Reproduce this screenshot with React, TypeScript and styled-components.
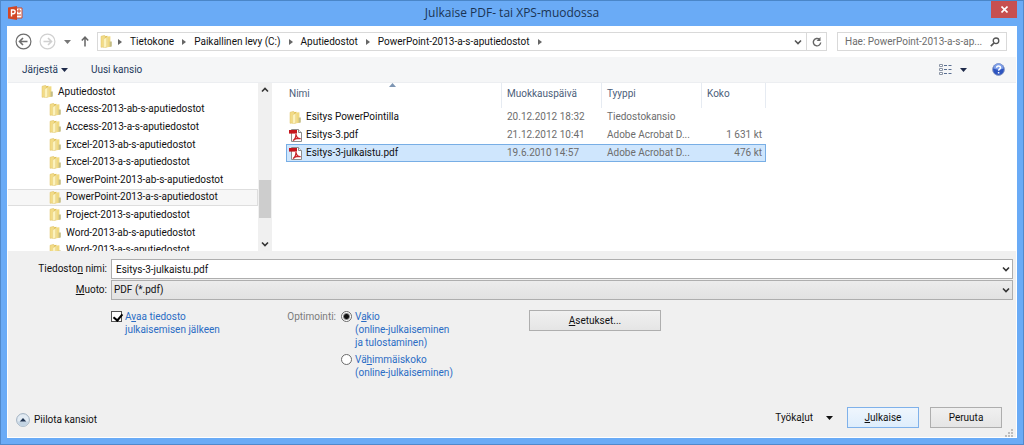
import React from "react";
import styled, { createGlobalStyle } from "styled-components";

const GlobalStyle = createGlobalStyle`
  * { box-sizing: border-box; }
  body { margin: 0; }
  button, input, select, table { font: inherit; color: inherit; }
  button { margin: 0; padding: 0; border: 0; background: none; }
  svg { display: block; flex: none; }
`;

const Frame = styled.div`
  min-height: 100vh;
  display: flex;
  flex-direction: column;
  padding: 0 6px 6px;
  border: 1px solid #5189cb;
  border-top-color: #4a86c8;
  background: #6aabf6;
  color: #111;
  font: 10px/16px Roboto, "Open Sans", sans-serif;
`;

const TitleBar = styled.header`
  display: grid;
  grid-template-columns: 26px 1fr 26px;
  height: 25px;
  svg { margin: 5px 0 0 1px; }
`;

const Title = styled.h1`
  margin: 0;
  text-align: center;
  font: 400 12px/24px "Open Sans", sans-serif;
  color: #1a3454;
`;

const CloseButton = styled.button`
  height: 17px;
  background: #c75050;
  display: flex;
  justify-content: center;
  && svg { margin: 5px 0 0; }
`;

const Client = styled.main`
  flex: 1;
  display: flex;
  flex-direction: column;
  background: #fff;
  border: 1px solid #fff;
  border-top: 0;
`;

const NavBar = styled.nav`
  display: flex;
  align-items: center;
  padding: 6px 9px 6px 7px;
  height: 31px;
`;

const IconButton = styled.button<{ $w: number }>`
  width: ${(p) => p.$w}px;
  display: flex;
  align-items: center;
  justify-content: center;
  align-self: stretch;
`;

const AddressBar = styled.div`
  flex: 1;
  min-width: 0;
  display: flex;
  align-items: center;
  height: 19px;
  margin-right: 10px;
  padding-left: 2px;
  border: 1px solid #d9d9d9;
`;

const Crumbs = styled.ol`
  flex: 1;
  display: flex;
  align-items: center;
  margin: 0;
  padding: 0 0 0 5px;
  list-style: none;
  white-space: nowrap;
  li { display: flex; align-items: center; gap: 8px; margin-right: 8px; }
  a { color: #111; text-decoration: none; }
`;

const RefreshButton = styled(IconButton)`
  border-left: 1px solid #d9d9d9;
`;

const SearchBox = styled.label`
  width: 170px;
  height: 19px;
  display: flex;
  align-items: center;
  border: 1px solid #d9d9d9;
  padding: 0 6px 0 7px;
  input {
    flex: 1;
    min-width: 0;
    padding: 0;
    border: 0;
    outline: 0;
    background: none;
    height: 16px;
  }
  input::placeholder { color: #6d6d6d; opacity: 1; }
`;

const ToolBar = styled.div`
  display: flex;
  align-items: center;
  height: 26px;
  padding: 0 10px 0 14px;
  background: #f5f6f7;
  border-bottom: 1px solid #eceef1;
  color: #1e395b;
`;

const ToolButton = styled.button`
  display: flex;
  align-items: center;
  gap: 3px;
  margin-right: 23px;
`;

const HelpButton = styled(IconButton)`
  margin-left: 17px;
`;

const Spacer = styled.span`
  flex: 1;
`;

const Browser = styled.section`
  display: flex;
  height: 168px;
  overflow: hidden;
`;

const Tree = styled.ul`
  width: 250px;
  height: 176px;
  flex: none;
  display: flex;
  flex-direction: column;
  margin: 0;
  padding: 0;
  list-style: none;
  line-height: 14px;
`;

const TreeItem = styled.li<{ $depth: number; $current?: boolean }>`
  flex: 1;
  min-height: 0;
  display: flex;
  align-items: center;
  gap: 4px;
  padding-left: ${(p) => 25 + p.$depth * 8}px;
  border: 1px solid ${(p) => (p.$current ? "#dedede" : "transparent")};
  border-left: 0;
  background: ${(p) => (p.$current ? "#f7f7f7" : "none")};
  background-clip: padding-box;
`;

const ScrollBar = styled.div`
  width: 14px;
  flex: none;
  display: flex;
  flex-direction: column;
  align-items: center;
  justify-content: space-between;
  background: #f0f0f0;
  padding: 4px 1px;
`;

const ScrollThumb = styled.div`
  width: 12px;
  height: 38px;
  margin-top: 64px;
  background: #cdcdcd;
`;

const FileTable = styled.table`
  width: 480px;
  margin-left: 14px;
  align-self: flex-start;
  table-layout: fixed;
  border-collapse: separate;
  border-spacing: 0;
  th {
    position: relative;
    height: 25px;
    padding: 0 0 3px 5px;
    text-align: left;
    font-weight: 400;
    color: #4c607a;
    border-right: 1px solid #e6ebf2;
  }
  th:first-child { padding-left: 3px; }
  td { height: 18px; padding: 0 4px 0 5px; color: #6d6d6d; white-space: nowrap; line-height: 16px; }
  td:first-child { padding-left: 3px; color: #111; }
  td:last-child { text-align: right; }
`;

const SortMark = styled.svg`
  position: absolute;
  top: 0;
  left: 48%;
`;

const FileRow = styled.tr<{ $selected?: boolean }>`
  td {
    border: 0 solid #78aee5;
    border-width: ${(p) => (p.$selected ? "1px 0" : "0")};
    background: ${(p) => (p.$selected ? "#cfe6fd" : "none")};
  }
  td:first-child { border-left-width: ${(p) => (p.$selected ? "1px" : "0")}; padding-left: ${(p) => (p.$selected ? "2px" : "3px")}; }
  td:last-child { border-right-width: ${(p) => (p.$selected ? "1px" : "0")}; padding-right: ${(p) => (p.$selected ? "3px" : "4px")}; }
`;

const FileName = styled.span`
  display: flex;
  align-items: center;
  gap: 4px;
`;

const Panel = styled.form`
  flex: 1;
  display: flex;
  flex-direction: column;
  background: #f0f0f0;
  padding: 8px 3px 9px 0;
`;

const Field = styled.div`
  display: grid;
  grid-template-columns: 99px 1fr;
  column-gap: 4px;
  align-items: center;
  margin-bottom: 1px;
  > label { text-align: right; }
`;

const Combo = styled.div<{ $filled?: boolean }>`
  display: flex;
  align-items: center;
  height: 20px;
  border: 1px solid #aeaeae;
  background: ${(p) => (p.$filled ? "linear-gradient(#ececec, #e2e2e2)" : "#fff")};
  padding-right: 2px;
  input, select {
    flex: 1;
    min-width: 0;
    height: 18px;
    border: 0;
    outline: 0;
    background: none;
    appearance: none;
    padding: 0 4px;
  }
  select { padding: 0 2px; }
`;

const Options = styled.div`
  display: flex;
  align-items: flex-start;
  padding: 9px 0 0 103px;
  line-height: 13px;
`;

const Choice = styled.label`
  display: flex;
  gap: 3px;
  color: #2a6cc4;
`;

const OpenAfter = styled(Choice)`
  width: 164px;
`;

const Legend = styled.span`
  width: 66px;
  padding-right: 5px;
  text-align: right;
  color: #7b7b7b;
`;

const Radios = styled.div`
  width: 188px;
  display: flex;
  flex-direction: column;
  gap: 4px;
`;

const Check = styled.input`
  appearance: none;
  position: relative;
  flex: none;
  width: 11px;
  height: 11px;
  margin: 1px 0 0;
  border: 1px solid #555;
  background: #fff;
  &:checked::after {
    content: "";
    position: absolute;
    left: 3px;
    top: 0;
    width: 4px;
    height: 7px;
    border: solid #000;
    border-width: 0 2px 2px 0;
    transform: rotate(40deg);
  }
`;

const Radio = styled.input`
  appearance: none;
  flex: none;
  width: 11px;
  height: 11px;
  margin: 1px 0 0;
  border: 1px solid #6b6b6b;
  border-radius: 50%;
  background: #fff;
  &:checked { background: radial-gradient(circle, #111 0 2px, #fff 4px) border-box; }
`;

const PushButton = styled.button<{ $width: number; $primary?: boolean }>`
  width: ${(p) => p.$width}px;
  height: 21px;
  border: 1px solid ${(p) => (p.$primary ? "#7fb1ea" : "#aeaeae")};
  background: ${(p) => (p.$primary ? "linear-gradient(#eff6fd, #deedfc)" : "linear-gradient(#f0f0f0, #e5e5e5)")};
  line-height: 18px;
`;

const Footer = styled.footer`
  position: relative;
  margin-top: auto;
  display: flex;
  align-items: flex-end;
  padding: 0 11px 0 8px;
`;

const TextButton = styled.button<{ $gap: number }>`
  display: flex;
  align-items: center;
  gap: ${(p) => p.$gap}px;
`;

const FooterActions = styled.div`
  display: flex;
  align-items: center;
  gap: 11px;
  > :first-child { margin-right: 3px; }
`;

const Grip = styled.svg`
  position: absolute;
  right: 0;
  bottom: -9px;
`;

const Folder = () => (
  <svg width="13" height="13" viewBox="0 0 13 13">
    <path d="M1 1.300 4.800.3V12L1 12.300z" fill="#f3dc85" stroke="#dcc06a" strokeWidth=".5" />
    <path d="M5 1.200 7.500.8v11.400L5 12.600z" fill="#e2c04f" />
    <path d="M3.600 4.200 6.800 2v10l-3.200.9z" fill="#fcf3bf" stroke="#e3cb78" strokeWidth=".4" />
    <path d="M7.600 1.600l2.800-.4v10.600l-2.800.5z" fill="#f1da80" />
    <path d="M9.600 6.400h2.200v5l-2.200.6z" fill="#c5bd85" />
  </svg>
);

const Pdf = () => (
  <svg width="13" height="13" viewBox="0 0 13 13">
    <path d="M2.500.5h7l3 3v9h-10z" fill="#fff" stroke="#8d8d8d" />
    <path d="M9.500.5v3h3" fill="#eee" stroke="#8d8d8d" />
    <path d="M0 1h8v3.600H0z" fill="#c5161d" />
    <path d="M4 11.500c1.800-1 3-3.500 3-6.500.3 3 2 4.800 4.600 4.600C9 9 6 9.600 4 11.500z" fill="none" stroke="#c9252b" strokeWidth="1.300" />
  </svg>
);

const Chevron = ({ up = false, color = "#333" }: { up?: boolean; color?: string }) => (
  <svg width="8" height="6" viewBox="0 0 8 6">
    <path d={up ? "M1 4.500 4 1.500l3 3" : "M1 1.500l3 3 3-3"} fill="none" stroke={color} strokeWidth="1.600" />
  </svg>
);

const Caret = ({ color = "#1e2a4a" }: { color?: string }) => (
  <svg width="7" height="4" viewBox="0 0 7 4">
    <path d="M0 0h7L3.500 4z" fill={color} />
  </svg>
);

const CrumbArrow = () => (
  <svg width="4" height="6" viewBox="0 0 4 6">
    <path d="M0 0l4 3-4 3z" fill="#666" />
  </svg>
);

const RoundArrow = ({ color, flip = false }: { color: string; flip?: boolean }) => (
  <svg width="17" height="17" viewBox="0 0 17 17" fill="none" stroke={color}>
    <circle cx="8.500" cy="8.500" r="7.400" strokeWidth="1.200" />
    <path d={flip ? "M4.500 8.500h8M9 5l3.500 3.500L9 12" : "M12.500 8.500h-8M8 5 4.500 8.500 8 12"} strokeWidth="1.600" />
  </svg>
);

const tree = [
  { name: "Aputiedostot", depth: 1 },
  { name: "Access-2013-ab-s-aputiedostot", depth: 2 },
  { name: "Access-2013-a-s-aputiedostot", depth: 2 },
  { name: "Excel-2013-ab-s-aputiedostot", depth: 2 },
  { name: "Excel-2013-a-s-aputiedostot", depth: 2 },
  { name: "PowerPoint-2013-ab-s-aputiedostot", depth: 2 },
  { name: "PowerPoint-2013-a-s-aputiedostot", depth: 2, current: true },
  { name: "Project-2013-s-aputiedostot", depth: 2 },
  { name: "Word-2013-ab-s-aputiedostot", depth: 2 },
  { name: "Word-2013-a-s-aputiedostot", depth: 2 },
];

const files = [
  { name: "Esitys PowerPointilla", date: "20.12.2012 18:32", type: "Tiedostokansio", size: "", folder: true },
  { name: "Esitys-3.pdf", date: "21.12.2012 10:41", type: "Adobe Acrobat D...", size: "1 631 kt" },
  { name: "Esitys-3-julkaistu.pdf", date: "19.6.2010 14:57", type: "Adobe Acrobat D...", size: "476 kt", selected: true },
];

const crumbs = ["Tietokone", "Paikallinen levy (C:)", "Aputiedostot", "PowerPoint-2013-a-s-aputiedostot"];

export default function App() {
  return (
    <Frame>
      <GlobalStyle />
      <TitleBar>
        <svg width="15" height="15" viewBox="0 0 15 15">
          <path d="M7 2h7v10H7z" fill="#fff" stroke="#d24726" />
          <path d="M9 5h4M9 9h4M11 3v4" stroke="#d24726" />
          <path d="M0 1.500 9 0v14L0 12.500z" fill="#d24726" />
          <path d="M3.500 10.500V4h1.800a1.800 1.800 0 0 1 0 3.700H3.500" fill="none" stroke="#fff" strokeWidth="1.400" />
        </svg>
        <Title>Julkaise PDF- tai XPS-muodossa</Title>
        <CloseButton type="button" aria-label="Sulje">
          <svg width="7" height="7" viewBox="0 0 7 7">
            <path d="M.5.5l6 6M6.500.5l-6 6" stroke="#fff" strokeWidth="1.600" />
          </svg>
        </CloseButton>
      </TitleBar>
      <Client>
        <NavBar>
          <IconButton $w={17} type="button" aria-label="Takaisin"><RoundArrow color="#6e6e6e" /></IconButton>
          <IconButton $w={31} type="button" aria-label="Eteenpäin"><RoundArrow color="#d0d0d0" flip /></IconButton>
          <IconButton $w={9} type="button" aria-label="Viimeisimmät"><Caret color="#777" /></IconButton>
          <IconButton $w={25} type="button" aria-label="Ylös">
            <svg width="8" height="11" viewBox="0 0 8 11" fill="none" stroke="#666" strokeWidth="1.500">
              <path d="M4 10.500V1.500M.8 4.500 4 1.200l3.200 3.300" />
            </svg>
          </IconButton>
          <AddressBar>
            <Folder />
            <Crumbs>
              <li><CrumbArrow /></li>
              {crumbs.map((c) => (
                <li key={c}><a href="#">{c}</a><CrumbArrow /></li>
              ))}
            </Crumbs>
            <IconButton $w={16} type="button" aria-label="Edelliset sijainnit"><Chevron color="#555" /></IconButton>
            <RefreshButton $w={20} type="button" aria-label="Päivitä">
              <svg width="10" height="10" viewBox="0 0 10 10">
                <path d="M7.500 2.400A3.700 3.700 0 1 0 8.700 5.500" fill="none" stroke="#666" strokeWidth="1.400" />
                <path d="M8.500 0v4H4.600z" fill="#666" />
              </svg>
            </RefreshButton>
          </AddressBar>
          <SearchBox>
            <input type="text" aria-label="Hae" placeholder="Hae: PowerPoint-2013-a-s-ap..." />
            <svg width="10" height="10" viewBox="0 0 10 10" fill="none" stroke="#555">
              <circle cx="6" cy="3.800" r="2.800" strokeWidth="1.300" />
              <path d="M4 6 .8 9.200" strokeWidth="1.700" />
            </svg>
          </SearchBox>
        </NavBar>
        <ToolBar>
          <ToolButton type="button">Järjestä <Caret /></ToolButton>
          <ToolButton type="button">Uusi kansio</ToolButton>
          <Spacer />
          <IconButton $w={16} type="button" aria-label="Näkymä">
            <svg width="13" height="11" viewBox="0 0 13 11">
              <path d="M.5.500h3v2h-3zM.5 4.500h3v2h-3zM.5 8.500h3v2h-3z" fill="#fff" stroke="#8a94a4" />
              <path d="M5 1.500h3M9.500 1.500h3M5 5.500h3M9.500 5.500h3M5 9.500h3M9.500 9.500h3" stroke="#5a6f92" />
            </svg>
          </IconButton>
          <IconButton $w={20} type="button" aria-label="Lisää näkymiä"><Caret /></IconButton>
          <HelpButton $w={16} type="button" aria-label="Ohje">
            <svg width="13" height="13" viewBox="0 0 13 13">
              <circle cx="6.500" cy="6.500" r="5.900" fill="#2e55c0" stroke="#8c9cc4" />
              <path d="M1.500 5.500a5 5 0 0 1 10 0c-3 1.500-7 1.500-10 0z" fill="#7d9ee8" />
              <path d="M4.600 4.800c0-2.400 3.900-2.300 3.900-.1 0 1.400-1.900 1.400-1.900 3M6.600 9v1.500" fill="none" stroke="#fff" strokeWidth="1.500" />
            </svg>
          </HelpButton>
        </ToolBar>
        <Browser>
          <Tree>
            {tree.map((t) => (
              <TreeItem key={t.name} $depth={t.depth} $current={t.current}><Folder />{t.name}</TreeItem>
            ))}
          </Tree>
          <ScrollBar>
            <Chevron up />
            <ScrollThumb />
            <Chevron />
          </ScrollBar>
          <FileTable>
            <colgroup><col width="216" /><col width="100" /><col width="100" /><col width="64" /></colgroup>
            <thead>
              <tr>
                <th scope="col">Nimi<SortMark width="7" height="4" viewBox="0 0 7 4"><path d="M0 4 3.500 0 7 4z" fill="#7d95b3" /></SortMark></th>
                <th scope="col">Muokkauspäivä</th>
                <th scope="col">Tyyppi</th>
                <th scope="col">Koko</th>
              </tr>
            </thead>
            <tbody>
              {files.map((f) => (
                <FileRow key={f.name} $selected={f.selected}>
                  <td><FileName>{f.folder ? <Folder /> : <Pdf />}{f.name}</FileName></td>
                  <td>{f.date}</td>
                  <td>{f.type}</td>
                  <td>{f.size}</td>
                </FileRow>
              ))}
            </tbody>
          </FileTable>
        </Browser>
        <Panel onSubmit={(e) => e.preventDefault()}>
          <Field>
            <label htmlFor="name">Tiedosto<u>n</u> nimi:</label>
            <Combo>
              <input id="name" type="text" defaultValue="Esitys-3-julkaistu.pdf" />
              <Chevron />
            </Combo>
          </Field>
          <Field>
            <label htmlFor="format"><u>M</u>uoto:</label>
            <Combo $filled>
              <select id="format"><option>PDF (*.pdf)</option></select>
              <Chevron />
            </Combo>
          </Field>
          <Options>
            <OpenAfter>
              <Check type="checkbox" defaultChecked />
              <span>A<u>v</u>aa tiedosto<br />julkaisemisen jälkeen</span>
            </OpenAfter>
            <Legend id="optimize">Optimointi:</Legend>
            <Radios role="radiogroup" aria-labelledby="optimize">
              <Choice>
                <Radio type="radio" name="optimize" defaultChecked />
                <span>V<u>a</u>kio<br />(online-julkaiseminen<br />ja tulostaminen)</span>
              </Choice>
              <Choice>
                <Radio type="radio" name="optimize" />
                <span>Vä<u>h</u>immäiskoko<br />(online-julkaiseminen)</span>
              </Choice>
            </Radios>
            <PushButton type="button" $width={132}><u>A</u>setukset...</PushButton>
          </Options>
          <Footer>
            <TextButton type="button" $gap={4}>
              <svg width="14" height="14" viewBox="0 0 14 14">
                <circle cx="7" cy="7" r="6.400" fill="#e2ebf3" stroke="#9fb0c0" />
                <path d="M2 8.500h10a5 5 0 0 1-10 0z" fill="#c3d4e3" />
                <path d="M3.800 8.500 7 5l3.200 3.500z" fill="#1f3350" />
              </svg>
              Piilota kansiot
            </TextButton>
            <Spacer />
            <FooterActions>
              <TextButton type="button" $gap={13}><span>Työka<u>l</u>ut</span><Caret color="#111" /></TextButton>
              <PushButton type="submit" $width={72} $primary><u>J</u>ulkaise</PushButton>
              <PushButton type="button" $width={72}>Peruuta</PushButton>
            </FooterActions>
            <Grip width="8" height="8" viewBox="0 0 8 8">
              <path d="M6 0h2v2H6zM3 3h2v2H3zM6 3h2v2H6zM0 6h2v2H0zM3 6h2v2H3zM6 6h2v2H6z" fill="#bdbdbd" />
            </Grip>
          </Footer>
        </Panel>
      </Client>
    </Frame>
  );
}
